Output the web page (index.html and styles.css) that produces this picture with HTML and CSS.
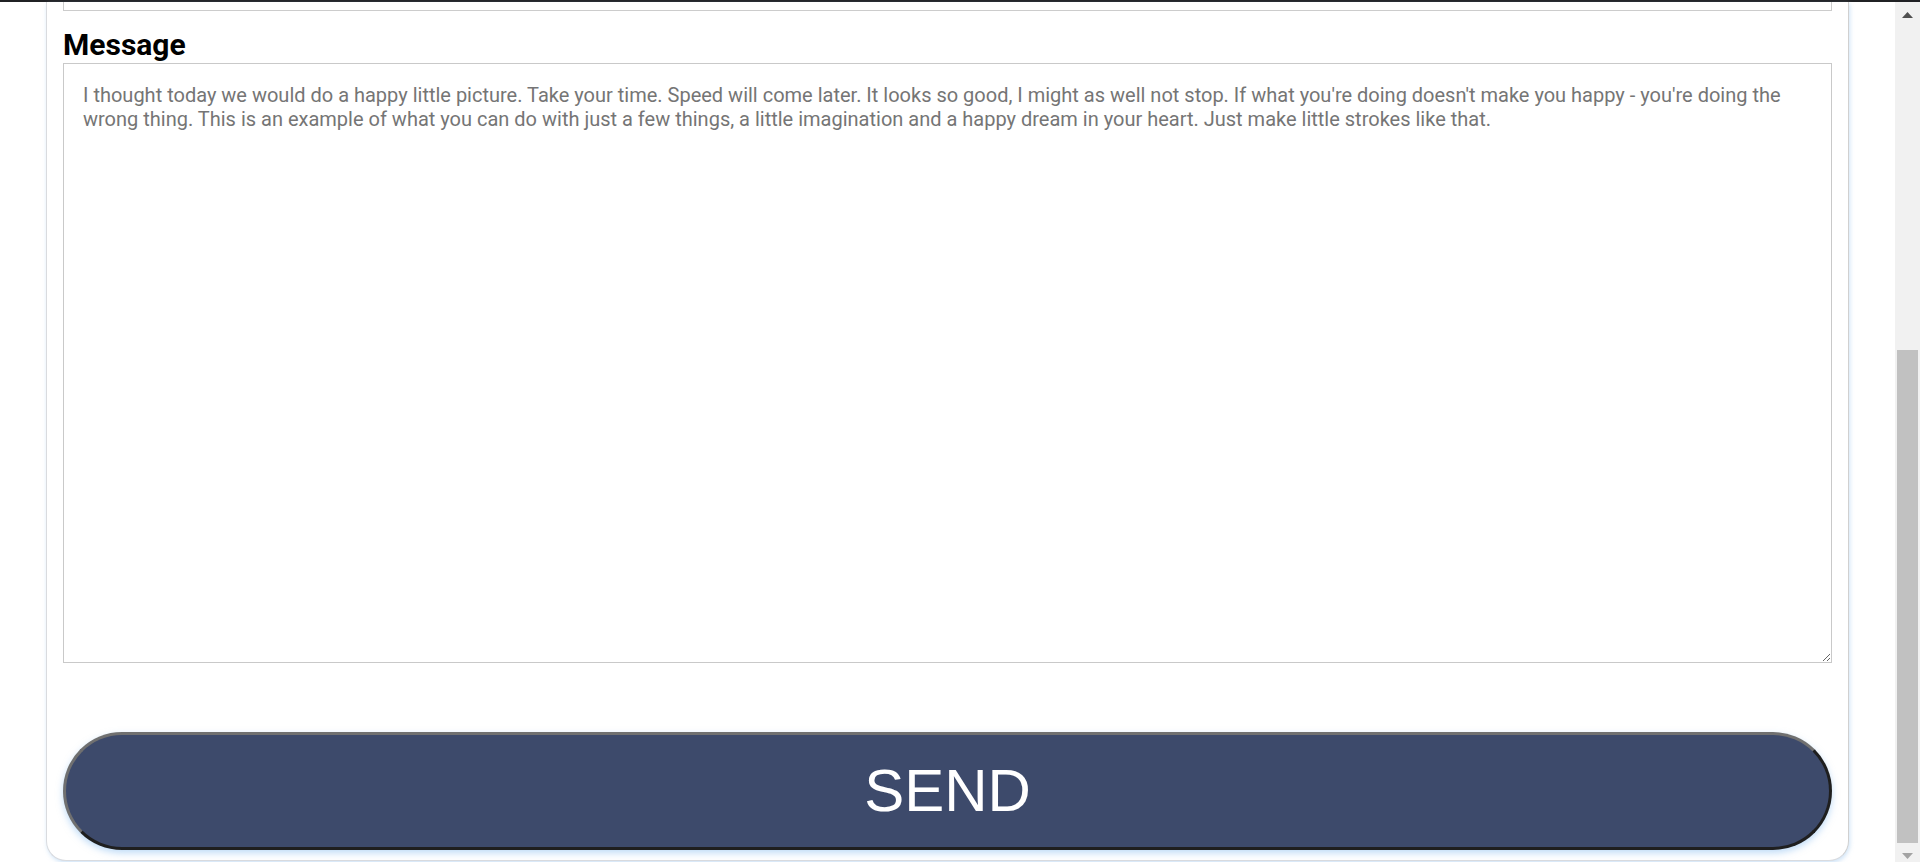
FILE: index.html
```html
<!DOCTYPE html>
<html lang="en">
<head>
<meta charset="utf-8">
<title>Contact</title>
<link rel="stylesheet" href="styles.css">
</head>
<body>
<div class="screen">
  <div class="topline"></div>
  <div class="viewport">
    <main class="page">
      <form class="card">
        <div class="prev-field"></div>
        <label class="label" for="message">Message</label>
        <textarea class="message" id="message">I thought today we would do a happy little picture. Take your time. Speed will come later. It looks so good, I might as well not stop. If what you're doing doesn't make you happy - you're doing the wrong thing. This is an example of what you can do with just a few things, a little imagination and a happy dream in your heart. Just make little strokes like that.</textarea>
        <button class="send" type="button">SEND</button>
      </form>
    </main>
    <div class="scrollbar">
      <div class="sb-btn sb-up">
        <svg width="11" height="6" viewBox="0 0 11 6"><polygon points="5.5,0 11,6 0,6" fill="#505050"/></svg>
      </div>
      <div class="sb-track"><div class="sb-thumb"></div></div>
      <div class="sb-btn sb-down">
        <svg width="11" height="6" viewBox="0 0 11 6"><polygon points="0,0 11,0 5.5,6" fill="#a3a3a3"/></svg>
      </div>
    </div>
  </div>
</div>
</body>
</html>
```
FILE: styles.css
```css
html, body {
  margin: 0;
  padding: 0;
  background: #ffffff;
  overflow: hidden;
}

.screen {
  width: 1920px;
  height: 862px;
  display: flex;
  flex-direction: column;
}

.topline {
  height: 2px;
  background: #202124;
  flex: none;
}

.viewport {
  flex: 1;
  display: flex;
  min-height: 0;
}

.page {
  flex: 1;
  min-width: 0;
  padding: 0 46px 0 46px;
}

.card {
  box-sizing: border-box;
  height: 859px;
  display: flex;
  flex-direction: column;
  padding: 0 16px 10px;
  border: 1px solid #d9dbdf;
  border-top: none;
  border-right-color: #d0d0d0;
  border-radius: 0 0 20px 20px;
  box-shadow: 1px 2px 4px rgba(170, 205, 240, 0.55);
  background: #ffffff;
}

.prev-field {
  height: 8px;
  border: 1px solid #cccccc;
  border-top: none;
  flex: none;
}

.label {
  display: block;
  margin: 16px 0 1px;
  font-family: Roboto, "Liberation Sans", sans-serif;
  font-weight: 700;
  font-size: 30px;
  line-height: 35px;
  color: #000000;
}

.message {
  display: block;
  box-sizing: border-box;
  width: 100%;
  height: 600px;
  margin: 0;
  padding: 19px 19px;
  border: 1px solid #c9c9c9;
  border-radius: 0;
  font-family: Roboto, "Liberation Sans", sans-serif;
  font-size: 20px;
  line-height: normal;
  color: #757575;
  background: #ffffff;
  flex: none;
}

.send {
  display: block;
  box-sizing: border-box;
  width: 100%;
  height: 118px;
  margin-top: 69px;
  border: 3px solid;
  border-color: #707070 #1f1f1f #1f1f1f #707070;
  border-radius: 60px;
  background: #3d4a6b;
  color: #ffffff;
  font-family: "Liberation Sans", Arial, sans-serif;
  font-size: 60px;
  line-height: 1;
  padding: 0;
  box-shadow: 0 3px 7px rgba(130, 185, 240, 0.5);
  flex: none;
}

.scrollbar {
  width: 25px;
  flex: none;
  display: flex;
  flex-direction: column;
  background: #f1f1f1;
}

.sb-btn {
  display: flex;
  justify-content: center;
  flex: none;
}

.sb-btn svg {
  display: block;
}

.sb-up {
  height: 25px;
  align-items: flex-start;
  padding-top: 10px;
  box-sizing: border-box;
}

.sb-down {
  height: 19px;
  align-items: flex-start;
  padding-top: 10px;
  box-sizing: border-box;
}

.sb-track {
  flex: 1;
  display: flex;
  flex-direction: column;
  justify-content: flex-end;
  padding: 0 2px;
}

.sb-thumb {
  height: 493px;
  background: #c1c1c1;
}
```
